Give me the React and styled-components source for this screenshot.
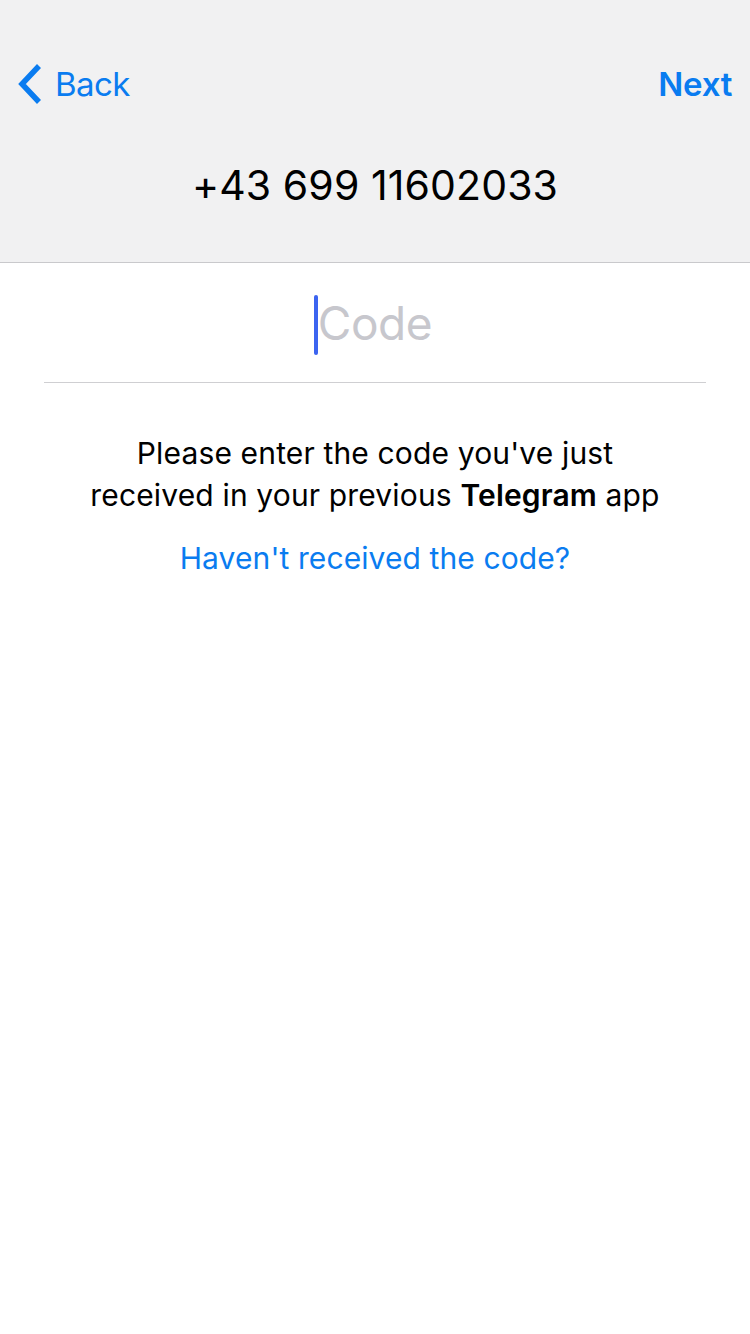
import React from "react";
import styled, { createGlobalStyle } from "styled-components";

const Global = createGlobalStyle`
  html, body { margin: 0; padding: 0; background: #ffffff; }
  body { font-family: Inter, "Noto Sans", sans-serif; -webkit-font-smoothing: antialiased; }
  #root { min-height: 1334px; background: #ffffff; }
`;

const Screen = styled.div`
  width: 750px;
  min-height: 1334px;
  display: flex;
  flex-direction: column;
  background: #ffffff;
`;

const Header = styled.header`
  height: 262px;
  background: #f1f1f2;
  border-bottom: 1px solid #c9c9cc;
  display: flex;
  flex-direction: column;
  box-sizing: content-box;
`;

const NavBar = styled.div`
  display: flex;
  align-items: center;
  justify-content: space-between;
  padding: 40px 18px 0 17px;
  height: 88px;
`;

const NavButton = styled.button`
  display: flex;
  align-items: center;
  gap: 12px;
  border: 0;
  background: none;
  padding: 0;
  color: #0a7cf0;
  font-family: Inter, "Noto Sans", sans-serif;
  font-size: 33px;
  font-weight: ${(p) => (p.$bold ? 600 : 400)};
  letter-spacing: ${(p) => (p.$bold ? "-0.3px" : "-0.6px")};
  cursor: pointer;
`;

const Phone = styled.div`
  flex: 1;
  display: flex;
  align-items: center;
  justify-content: center;
  padding-bottom: 20px;
  font-size: 41px;
  color: #000;
  letter-spacing: 0.1px;
`;

const Body = styled.main`
  display: flex;
  flex-direction: column;
  align-items: center;
`;

const CodeField = styled.div`
  width: 662px;
  height: 119px;
  border-bottom: 1px solid #cfcfd2;
  display: flex;
  align-items: center;
  justify-content: center;
`;

const Caret = styled.span`
  display: inline-block;
  width: 4px;
  height: 60px;
  border-radius: 2px;
  background: #3c64f0;
  margin-right: 0;
  transform: translateY(2px);
`;

const Placeholder = styled.span`
  font-size: 46px;
  color: #c7c7cd;
  letter-spacing: -0.4px;
  margin-right: 4px;
`;

const Hint = styled.p`
  margin: 49px 0 0;
  text-align: center;
  font-size: 30px;
  line-height: 42px;
  color: #000;
  letter-spacing: 0.15px;
`;

const Strong = styled.b`
  font-weight: 600;
`;

const Link = styled.a`
  margin-top: 21px;
  font-size: 30px;
  line-height: 42px;
  color: #0a7cf0;
  letter-spacing: 0.1px;
  text-decoration: none;
`;

export default function App() {
  return (
    <>
      <Global />
      <Screen>
        <Header>
          <NavBar>
            <NavButton>
              <svg width="26" height="42" viewBox="0 0 26 42">
                <path d="M22 3 L5 21 L22 39" fill="none" stroke="#0a7cf0" strokeWidth="5.5" strokeLinecap="butt" strokeLinejoin="miter" />
              </svg>
              Back
            </NavButton>
            <NavButton $bold>Next</NavButton>
          </NavBar>
          <Phone>+43 699 11602033</Phone>
        </Header>
        <Body>
          <CodeField>
            <Caret />
            <Placeholder>Code</Placeholder>
          </CodeField>
          <Hint>
            Please enter the code you've just
            <br />
            received in your previous <Strong>Telegram</Strong> app
          </Hint>
          <Link>Haven't received the code?</Link>
        </Body>
      </Screen>
    </>
  );
}
